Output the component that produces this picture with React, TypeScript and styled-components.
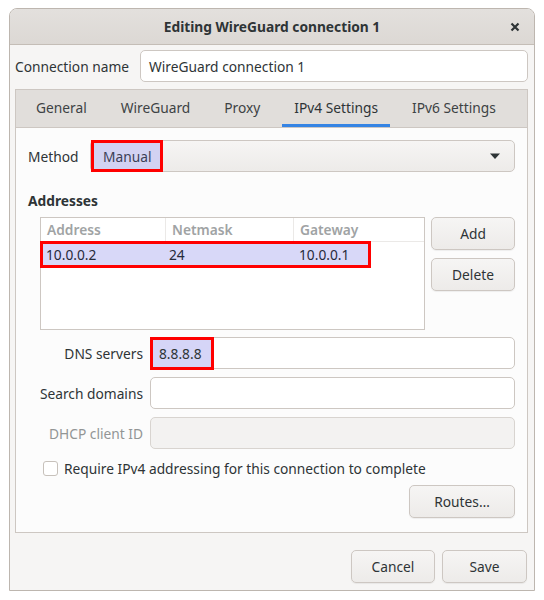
import { createGlobalStyle } from 'styled-components';
import styled from 'styled-components';

const GlobalStyle = createGlobalStyle`
  html, body {
    margin: 0;
    padding: 0;
    background: #ffffff;
  }
  body {
    font-family: "Noto Sans", "DejaVu Sans", sans-serif;
    font-size: 13.75px;
    color: #2e3436;
  }
`;

const TABS = ['General', 'WireGuard', 'Proxy', 'IPv4 Settings', 'IPv6 Settings'];
const ACTIVE_TAB = 'IPv4 Settings';

const App = () => {
  return (
    <>
      <GlobalStyle />
      <Window>
        <TitleBar>
          <Title>Editing WireGuard connection 1</Title>
          <CloseButton aria-label="Close">
            <svg width="10" height="10" viewBox="0 0 10 10">
              <path d="M1.5 1.5 L8.5 8.5 M8.5 1.5 L1.5 8.5" stroke="#2e3436" strokeWidth="2.2" strokeLinecap="butt" />
            </svg>
          </CloseButton>
        </TitleBar>

        <Body>
          <NameRow>
            <span>Connection name</span>
            <Entry>WireGuard connection 1</Entry>
          </NameRow>

          <Notebook>
            <TabBar>
              {TABS.map(tab => (
                <Tab key={tab} $active={tab === ACTIVE_TAB}>{tab}</Tab>
              ))}
            </TabBar>

            <Page>
              <MethodRow>
                <span>Method</span>
                <Combo>
                  <Marked>Manual</Marked>
                  <svg width="12" height="8" viewBox="0 0 12 8">
                    <path d="M1 1.5 H11 L6 7 Z" fill="#2e3436" />
                  </svg>
                </Combo>
              </MethodRow>

              <SectionTitle>Addresses</SectionTitle>

              <AddressArea>
                <Tree>
                  <TreeHeader>
                    <HeaderCell>Address</HeaderCell>
                    <HeaderCell>Netmask</HeaderCell>
                    <HeaderCell $last>Gateway</HeaderCell>
                  </TreeHeader>
                  <TreeRow>
                    <RowMark>
                      <Cell>10.0.0.2</Cell>
                      <Cell>24</Cell>
                      <Cell>10.0.0.1</Cell>
                    </RowMark>
                  </TreeRow>
                </Tree>
                <SideButtons>
                  <Button>Add</Button>
                  <Button>Delete</Button>
                </SideButtons>
              </AddressArea>

              <FieldGrid>
                <FieldLabel>DNS servers</FieldLabel>
                <Entry><EntryMark>8.8.8.8</EntryMark></Entry>
                <FieldLabel>Search domains</FieldLabel>
                <Entry />
                <FieldLabel $disabled>DHCP client ID</FieldLabel>
                <Entry $disabled />
              </FieldGrid>

              <CheckRow>
                <CheckBox />
                <span>Require IPv4 addressing for this connection to complete</span>
              </CheckRow>

              <RoutesRow>
                <Button $width={106}>Routes…</Button>
              </RoutesRow>
            </Page>
          </Notebook>

          <Actions>
            <Button $width={84}>Cancel</Button>
            <Button $width={85}>Save</Button>
          </Actions>
        </Body>
      </Window>
    </>
  );
};

export default App;

const Window = styled.div`
  box-sizing: border-box;
  margin: 8px 0 0 9px;
  width: 526px;
  height: 583px;
  border: 1px solid #bdb6af;
  border-radius: 8px 8px 0 0;
  background: #f6f5f4;
  display: flex;
  flex-direction: column;
  overflow: hidden;
`;

const TitleBar = styled.div`
  position: relative;
  height: 35px;
  flex-shrink: 0;
  background: linear-gradient(to bottom, #e3e0dd, #dcd8d4);
  border-bottom: 1px solid #c4bdb6;
  display: flex;
  align-items: center;
  justify-content: center;
`;

const Title = styled.div`
  font-weight: bold;
  color: #2e3436;
`;

const CloseButton = styled.div`
  position: absolute;
  right: 14px;
  top: 13px;
  width: 10px;
  height: 10px;
  display: flex;
`;

const Body = styled.div`
  flex: 1;
  display: flex;
  flex-direction: column;
  padding: 5px 6px 7px 5px;
  min-height: 0;
`;

const NameRow = styled.div`
  display: grid;
  grid-template-columns: 125px 1fr;
  align-items: center;
  height: 32px;
`;

const Entry = styled.div<{ $disabled?: boolean }>`
  box-sizing: border-box;
  height: 32px;
  border: 1px solid ${p => (p.$disabled ? '#d8d4d0' : '#cdc7c2')};
  border-radius: 5px;
  background: ${p => (p.$disabled ? '#f3f2f1' : '#ffffff')};
  display: flex;
  align-items: center;
  padding: 0 8px;
`;

const EntryMark = styled.span`
  box-sizing: border-box;
  height: 33px;
  margin: -1px 0 -1px -9px;
  padding: 0 9px 0 6px;
  display: flex;
  align-items: center;
  background: #d5d5f7;
  border: 3px solid #ff0000;
`;

const Notebook = styled.div`
  margin-top: 7px;
  flex: 1;
  display: flex;
  flex-direction: column;
  border: 1px solid #cdc7c2;
  background: #fcfcfc;
`;

const TabBar = styled.div`
  display: flex;
  gap: 10px;
  height: 37px;
  padding-left: 8px;
  background: #e1dedb;
  border-bottom: 1px solid #cdc7c2;
`;

const Tab = styled.div<{ $active?: boolean }>`
  box-sizing: border-box;
  padding: 0 12px;
  display: flex;
  align-items: center;
  color: ${p => (p.$active ? '#2e3436' : '#3d4244')};
  border-bottom: 3px solid ${p => (p.$active ? '#3584e4' : 'transparent')};
`;

const Page = styled.div`
  flex: 1;
  padding: 12px 12px 12px 12px;
  display: flex;
  flex-direction: column;
`;

const MethodRow = styled.div`
  display: grid;
  grid-template-columns: 62px 1fr;
  align-items: center;
  height: 32px;
`;

const Combo = styled.div`
  box-sizing: border-box;
  height: 32px;
  border: 1px solid #cdc7c2;
  border-radius: 5px;
  background: linear-gradient(to bottom, #f6f5f4, #edebe9);
  display: flex;
  align-items: center;
  justify-content: space-between;
  padding-right: 13px;
`;

const Marked = styled.span`
  box-sizing: border-box;
  height: 32px;
  margin: -1px 0 -1px 0;
  padding: 0 9px 0 9px;
  display: flex;
  align-items: center;
  background: #d2d2f2;
  color: #3b3f56;
  border: 3px solid #ff0000;
`;

const SectionTitle = styled.div`
  font-weight: bold;
  margin-top: 19px;
  line-height: 20px;
`;

const AddressArea = styled.div`
  display: flex;
  gap: 6px;
  margin-top: 6px;
  padding-left: 12px;
`;

const Tree = styled.div`
  box-sizing: border-box;
  width: 386px;
  height: 113px;
  border: 1px solid #cdc7c2;
  background: #ffffff;
`;

const TreeHeader = styled.div`
  display: grid;
  grid-template-columns: 125px 128px 1fr;
  height: 23px;
  border-bottom: 1px solid #ebe9e7;
`;

const HeaderCell = styled.div<{ $last?: boolean }>`
  display: flex;
  align-items: center;
  padding-left: 6px;
  font-weight: 600;
  color: #a0a3a4;
  border-right: ${p => (p.$last ? 'none' : '1px solid #ebe9e7')};
`;

const TreeRow = styled.div`
  display: flex;
  margin-left: -1px;
`;

const RowMark = styled.div`
  box-sizing: border-box;
  width: 331px;
  height: 27px;
  margin-top: -1px;
  display: grid;
  grid-template-columns: 123px 130px 1fr;
  align-items: center;
  background: #d8d8f8;
  border: 3px solid #ff0000;
`;

const Cell = styled.div`
  padding-left: 3px;
  color: #262a3a;
`;

const SideButtons = styled.div`
  display: flex;
  flex-direction: column;
  gap: 8px;
`;

const Button = styled.div<{ $width?: number }>`
  box-sizing: border-box;
  width: ${p => p.$width ?? 84}px;
  height: 33px;
  border: 1px solid #cdc7c2;
  border-radius: 5px;
  background: linear-gradient(to bottom, #f6f5f4, #edebe9);
  box-shadow: 0 1px 1px rgba(0, 0, 0, 0.06);
  display: flex;
  align-items: center;
  justify-content: center;
  color: #2e3436;
`;

const FieldGrid = styled.div`
  display: grid;
  grid-template-columns: 115px 1fr;
  column-gap: 7px;
  row-gap: 8px;
  margin-top: 7px;
  align-items: center;
`;

const FieldLabel = styled.div<{ $disabled?: boolean }>`
  text-align: right;
  color: ${p => (p.$disabled ? '#929595' : '#2e3436')};
`;

const CheckRow = styled.div`
  display: flex;
  align-items: center;
  gap: 6px;
  margin-top: 10px;
  padding-left: 15px;
  height: 18px;
`;

const CheckBox = styled.div`
  box-sizing: border-box;
  width: 15px;
  height: 15px;
  border: 1px solid #c7c1bb;
  border-radius: 3px;
  background: #ffffff;
`;

const RoutesRow = styled.div`
  display: flex;
  justify-content: flex-end;
  margin-top: 8px;
`;

const Actions = styled.div`
  display: flex;
  justify-content: flex-end;
  gap: 7px;
  margin-top: 17px;
  padding-right: 1px;
`;
